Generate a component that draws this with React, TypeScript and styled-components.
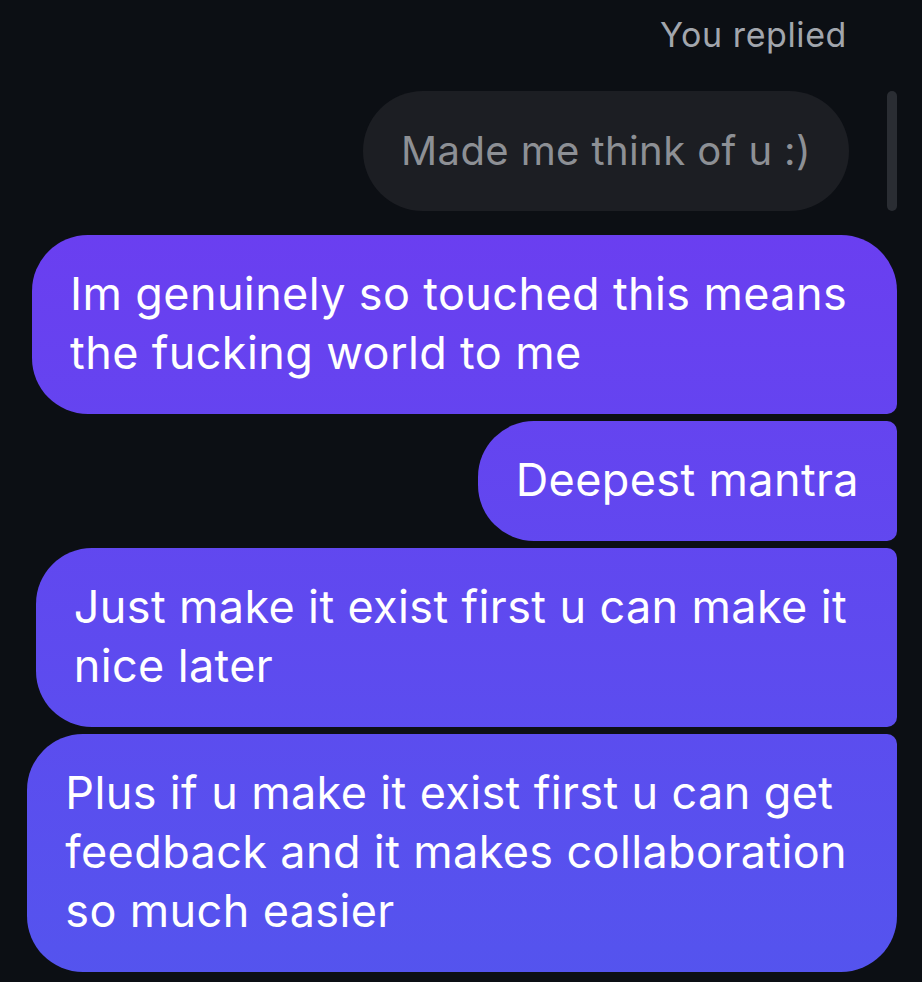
import React from "react";
import styled, { createGlobalStyle } from "styled-components";

const GlobalStyle = createGlobalStyle`
  html, body {
    margin: 0;
    padding: 0;
    background: #0c0f14;
  }
  body {
    font-family: Inter, "Noto Sans", "Liberation Sans", sans-serif;
    -webkit-font-smoothing: antialiased;
  }
`;

const Thread = styled.div`
  display: flex;
  flex-direction: column;
  align-items: flex-end;
  padding: 15px 25px 0 0;
  min-height: 982px;
  box-sizing: border-box;
`;

const ReplyLabel = styled.div`
  font-size: 34px;
  line-height: 40px;
  color: #a2a6ad;
  margin-right: 50px;
  letter-spacing: 0.6px;
`;

const ReplyRow = styled.div`
  display: flex;
  align-items: stretch;
  gap: 38px;
  margin-top: 36px;
  margin-bottom: 24px;
`;

const QuoteBubble = styled.div`
  background: #1c1e23;
  color: #8d9095;
  font-size: 40px;
  line-height: 56px;
  letter-spacing: 0.4px;
  padding: 32px 38px;
  border-radius: 60px;
  white-space: nowrap;
`;

const QuoteBar = styled.div`
  width: 10px;
  border-radius: 5px;
  background: #2a2d33;
`;

const Group = styled.div`
  display: flex;
  flex-direction: column;
  align-items: flex-end;
  gap: 7px;
`;

type Pos = "first" | "middle" | "last";

const Bubble = styled.div<{ $pos: Pos; $wrapped: boolean }>`
  background: linear-gradient(180deg, #7138f1 0px, #5454ee 982px);
  background-attachment: fixed;
  color: #ffffff;
  font-size: 45px;
  line-height: 59px;
  letter-spacing: 0.37px;
  padding: 29px ${(p) => (p.$wrapped ? "50px" : "38px")} 32px 38px;
  border-radius: 56px
    ${(p) => (p.$pos === "first" ? "56px" : "10px")}
    ${(p) => (p.$pos === "last" ? "56px" : "10px")}
    56px;
  white-space: nowrap;
`;

const Line = styled.div``;

const messages: string[][] = [
  ["Im genuinely so touched this means", "the fucking world to me"],
  ["Deepest mantra"],
  ["Just make it exist first u can make it", "nice later"],
  [
    "Plus if u make it exist first u can get",
    "feedback and it makes collaboration",
    "so much easier",
  ],
];

export default function App() {
  return (
    <>
      <GlobalStyle />
      <Thread>
        <ReplyLabel>You replied</ReplyLabel>
        <ReplyRow>
          <QuoteBubble>Made me think of u :)</QuoteBubble>
          <QuoteBar />
        </ReplyRow>
        <Group>
          {messages.map((lines, i) => (
            <Bubble
              key={i}
              $wrapped={lines.length > 1}
              $pos={i === 0 ? "first" : i === messages.length - 1 ? "last" : "middle"}
            >
              {lines.map((l, j) => (
                <Line key={j}>{l}</Line>
              ))}
            </Bubble>
          ))}
        </Group>
      </Thread>
    </>
  );
}
